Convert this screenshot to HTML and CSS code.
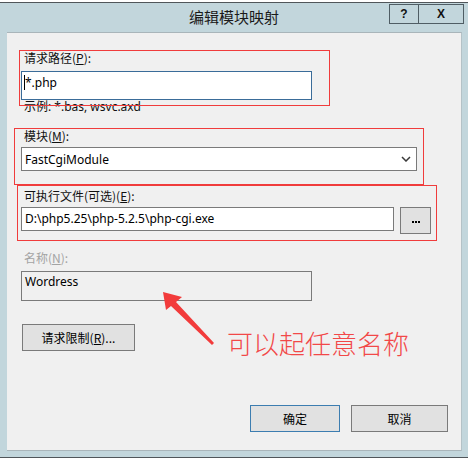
FILE: index.html
```html
<!DOCTYPE html>
<html lang="zh-CN">
<head>
<meta charset="utf-8">
<title>编辑模块映射</title>
<link rel="stylesheet" href="styles.css">
</head>
<body>
<div class="screen">
  <div class="window">
    <div class="titlebar">
      <span></span>
      <div class="title">编辑模块映射</div>
      <div class="caption-btns">
        <span class="cap cap-help">?</span>
        <span class="cap cap-close">X</span>
      </div>
    </div>
    <div class="client">
      <div class="form">
        <label class="lbl lbl-path">请求路径(<u>P</u>):</label>
        <div class="textbox focused tb-path"><span class="caret"></span>*.php</div>
        <div class="hint">示例: *.bas, wsvc.axd</div>

        <label class="lbl lbl-module">模块(<u>M</u>):</label>
        <div class="select">
          <span>FastCgiModule</span>
          <svg class="chev" width="10" height="6" viewBox="0 0 10 6"><polyline points="1,1 5,5 9,1" fill="none" stroke="#3a3a3a" stroke-width="1.5"/></svg>
        </div>

        <label class="lbl lbl-exe">可执行文件(可选)(<u>E</u>):</label>
        <div class="exe-row">
          <div class="textbox tb-exe">D:\php5.25\php-5.2.5\php-cgi.exe</div>
          <button class="btn btn-browse"><i></i><i></i><i></i></button>
        </div>

        <label class="lbl lbl-name disabled">名称(<u>N</u>):</label>
        <div class="textbox tb-name">Wordress</div>

        <button class="btn btn-limit">请求限制(<u>R</u>)...</button>

        <div class="footer">
          <button class="btn btn-ok">确定</button>
          <button class="btn btn-cancel">取消</button>
        </div>
      </div>

      <!-- red annotation frames and note drawn over the form -->
      <div class="mark mark-path"></div>
      <div class="mark mark-module"></div>
      <div class="mark mark-exe"></div>
      <svg class="note-arrow" width="70" height="65" viewBox="0 0 70 65">
        <polygon points="13,7 32,12 26,17 64,58 62,60 21,21 16,25" fill="#f23b3b"/>
      </svg>
      <div class="note-text">可以起任意名称</div>
    </div>
  </div>
</div>
</body>
</html>
```

FILE: styles.css
```css
html, body {
  margin: 0;
  padding: 0;
  background: #ffffff;
}

.screen {
  width: 468px;
  height: 460px;
  overflow: hidden;
  padding-top: 2px;
  box-sizing: border-box;
  font-family: "Noto Sans", "Noto Sans CJK SC", sans-serif;
  font-size: 12px;
  color: #000;
}

.window {
  background: #c2d6dc;
  border-top: 1px solid #50565a;
  border-bottom: 1px solid #50565a;
  height: 456px;
  box-sizing: border-box;
  padding: 0 6px 6px 7px;
}

/* caption */
.titlebar {
  height: 29px;
  display: grid;
  grid-template-columns: 1fr auto 1fr;
  margin: 0 -6px 0 -7px;
}

.title {
  font-family: "Noto Sans CJK SC", sans-serif;
  font-size: 15px;
  line-height: 18px;
  padding-top: 5px;
  color: #1a1a1a;
  white-space: nowrap;
}

.caption-btns {
  justify-self: end;
  display: flex;
  margin: 1px 4px 0 0;
  height: 20px;
  border: 1px solid #4f5d64;
  box-sizing: border-box;
}

.cap {
  display: flex;
  align-items: center;
  justify-content: center;
  font-family: "Liberation Sans", sans-serif;
  font-weight: bold;
  font-size: 12px;
  color: #111;
}

.cap-help {
  width: 28px;
  border-right: 1px solid #4f5d64;
}

.cap-close {
  width: 44px;
}

/* dialog body */
.client {
  position: relative;
  height: 419px;
  box-sizing: border-box;
  background: #f0f0f0;
  border-top: 1px solid #a9b5ba;
  border-right: 1px solid #b4c2c7;
  border-bottom: 1px solid #a9b5ba;
}

.form {
  display: flex;
  flex-direction: column;
  align-items: flex-start;
  padding: 17px 0 0 14px;
}

.lbl {
  font-family: "Noto Sans CJK SC", sans-serif;
  line-height: 16px;
  padding-left: 3px;
  color: #111;
}

.lbl u {
  text-underline-offset: 1px;
}

.lbl.disabled {
  color: #a3a3a3;
}

.lbl-module { margin-top: 14px; }
.lbl-exe { margin-top: 17px; }
.lbl-name { margin-top: 16px; }

.textbox {
  background: #fff;
  border: 1px solid #7a7a7a;
  box-sizing: border-box;
  padding: 0 3px;
  line-height: 16px;
  white-space: nowrap;
  display: flex;
  align-items: center;
}

.textbox.focused {
  border-color: #3a6c99;
}

.tb-path {
  width: 291px;
  height: 29px;
  margin-top: 5px;
  align-items: flex-start;
  padding-top: 3px;
  padding-left: 2px;
}

.caret {
  width: 1px;
  height: 15px;
  background: #000;
}

.hint {
  line-height: 14px;
  padding-left: 3px;
  font-family: "Noto Sans", "Noto Sans CJK SC", sans-serif;
  color: #111;
}

.select {
  margin-top: 3px;
  width: 396px;
  height: 24px;
  box-sizing: border-box;
  border: 1px solid #7a7a7a;
  background: #fff;
  display: flex;
  align-items: center;
  justify-content: space-between;
  padding: 0 4px 0 3px;
}

.chev {
  margin-right: 1px;
}

.exe-row {
  margin-top: 3px;
  display: flex;
  align-items: flex-start;
  gap: 6px;
}

.tb-exe {
  width: 373px;
  height: 24px;
}

.btn {
  font-family: "Noto Sans CJK SC", sans-serif;
  font-size: 12px;
  color: #000;
  background: #e1e1e1;
  border: 1px solid #7a7a7a;
  box-sizing: border-box;
  height: 27px;
  padding: 0;
  display: flex;
  align-items: center;
  justify-content: center;
}

.btn-browse {
  width: 31px;
  gap: 1px;
  padding-top: 3px;
}

.btn-browse i {
  width: 2px;
  height: 2px;
  background: #000;
}

.tb-name {
  margin-top: 5px;
  width: 291px;
  height: 30px;
  background: #f0f0f0;
  align-items: flex-start;
  padding-top: 2px;
}

.btn-limit {
  margin: 23px 0 0 1px;
  width: 113px;
}

.footer {
  align-self: stretch;
  display: flex;
  justify-content: flex-end;
  gap: 11px;
  margin-top: 54px;
  padding-right: 13px;
}

.btn-ok {
  width: 90px;
  border-color: #3c7db0;
}

.btn-cancel {
  width: 97px;
}

/* red annotations */
.mark {
  position: absolute;
  border: 1px solid #f03c3c;
  box-sizing: border-box;
}

.mark-path {
  left: 12px;
  top: 17px;
  width: 311px;
  height: 56px;
}

.mark-module {
  left: 7px;
  top: 95px;
  width: 410px;
  height: 57px;
}

.mark-exe {
  left: 10px;
  top: 152px;
  width: 420px;
  height: 56px;
}

.note-arrow {
  position: absolute;
  left: 143px;
  top: 252px;
}

.note-text {
  position: absolute;
  left: 220px;
  top: 293px;
  font-family: "Noto Sans CJK SC", sans-serif;
  font-size: 26px;
  font-weight: 300;
  line-height: 34px;
  color: #f24848;
  white-space: nowrap;
}
```
